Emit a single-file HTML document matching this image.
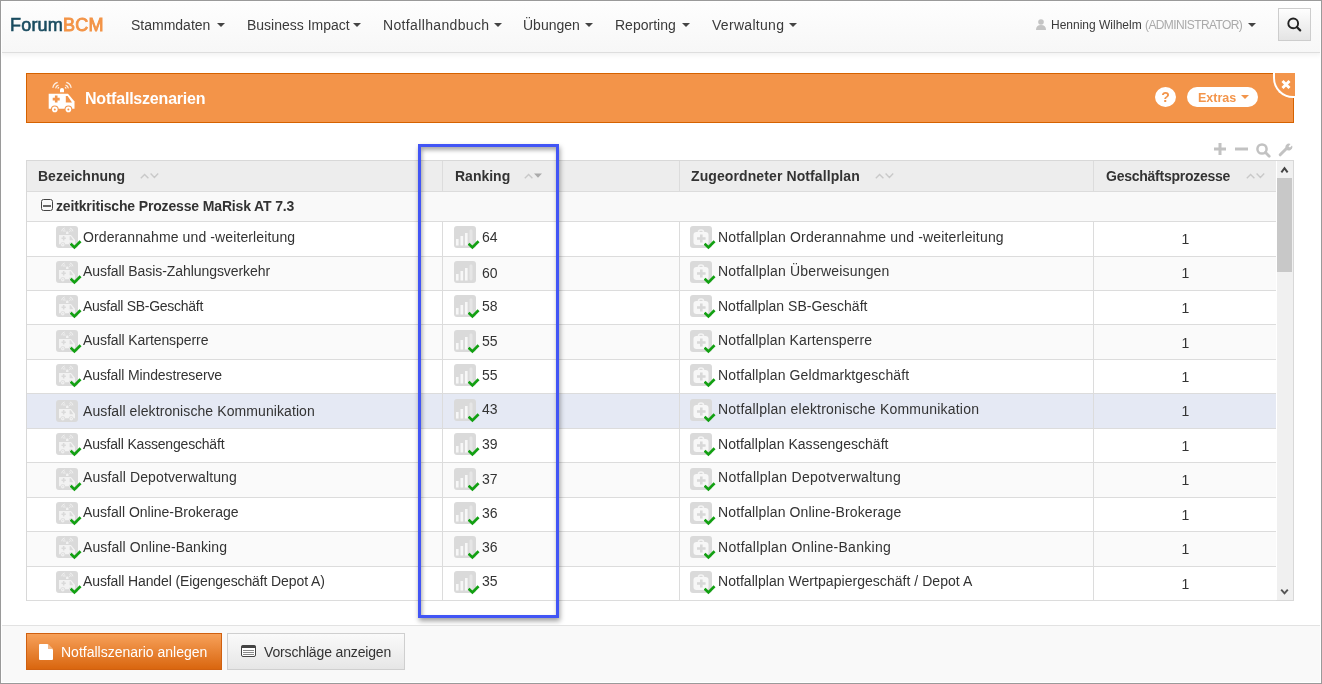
<!DOCTYPE html>
<html><head><meta charset="utf-8">
<style>
*{box-sizing:border-box;margin:0;padding:0}
html,body{width:1322px;height:684px;overflow:hidden;background:#fff}
body{position:relative;font-family:"Liberation Sans",sans-serif;color:#333;font-size:14px}
.a{position:absolute}
#frame{position:absolute;left:0;top:0;width:1322px;height:684px;border:1px solid #9a9a9a;box-shadow:inset 0 0 0 1px #fff;z-index:50;pointer-events:none}
#nav{position:absolute;left:1px;top:1px;width:1320px;height:52px;background:linear-gradient(#fefefe,#f7f7f7);border-bottom:1px solid #dedede;box-shadow:0 2px 5px rgba(0,0,0,0.06)}
.nv{position:absolute;top:17px;font-size:14px;color:#3a3a3a;line-height:16px;white-space:nowrap}
.caret{position:absolute;width:0;height:0;border-left:4px solid transparent;border-right:4px solid transparent;border-top:4px solid #444}
#logo{position:absolute;left:10px;top:15px;font-size:18px;font-weight:normal;line-height:20px;letter-spacing:0.2px;-webkit-text-stroke:0.6px currentColor;will-change:transform}
#panel{position:absolute;left:26px;top:73px;width:1268px;height:50px;background:#f39449;border:1px solid #d56200}
.tx{position:absolute;font-size:14px;line-height:20px;white-space:nowrap;color:#333}
.c4{left:1094px;width:183px;text-align:center}
.r{position:absolute;left:27px;width:1249px;background:#fff}
.r.alt{background:#fafafa}
.r.hov{background:#e5e9f4}
.hl{position:absolute;left:27px;width:1249px;height:1px;background:#dcdcdc}
.vl{position:absolute;width:1px;background:#dcdcdc}
.ib{position:absolute;width:22px;height:22px;background:#dadada;border-radius:3px}
.ib svg{position:absolute;left:0;top:0}
.ib svg.ck{left:14px;top:14px}
.th{position:absolute;top:167px;font-size:14px;font-weight:bold;line-height:18px;color:#333;white-space:nowrap}
.sa{position:absolute;top:172px}
.tx,.th,.nv,.a{will-change:transform}
</style></head><body>
<div id="frame"></div>
<div id="nav">
</div>
<div id="logo" style="color:#1a4c60">Forum<span style="color:#f39447;-webkit-text-stroke:0.9px #f39447">BCM</span></div>
<div class="nv" style="left:131px">Stammdaten</div><div class="caret" style="left:217px;top:23px;border-top-color:#444"></div>
<div class="nv" style="left:247px">Business Impact</div><div class="caret" style="left:353px;top:23px;border-top-color:#444"></div>
<div class="nv" style="left:383px;letter-spacing:0.35px">Notfallhandbuch</div><div class="caret" style="left:494px;top:23px;border-top-color:#444"></div>
<div class="nv" style="left:523px">Übungen</div><div class="caret" style="left:585px;top:23px;border-top-color:#444"></div>
<div class="nv" style="left:615px">Reporting</div><div class="caret" style="left:682px;top:23px;border-top-color:#444"></div>
<div class="nv" style="left:712px;letter-spacing:0.3px">Verwaltung</div><div class="caret" style="left:789px;top:23px;border-top-color:#444"></div>
<svg class="a" style="left:1036px;top:19px" width="10" height="11" viewBox="0 0 10 11"><circle cx="5" cy="3" r="2.8" fill="#c4c4c4"/><path d="M0 11 Q0 6 5 6 Q10 6 10 11Z" fill="#c4c4c4"/></svg>
<div class="nv" style="left:1051px;top:18px;font-size:12px;line-height:14px">Henning Wilhelm</div>
<div class="nv" style="left:1145px;top:18px;font-size:12px;line-height:14px;color:#aaa;letter-spacing:-0.6px">(ADMINISTRATOR)</div>
<div class="caret" style="left:1248px;top:23px;border-top-color:#444"></div>
<div class="a" style="left:1278px;top:8px;width:33px;height:33px;border:1px solid #cdcdcd;background:linear-gradient(#fefefe,#e4e4e4)"></div>
<svg class="a" style="left:1287px;top:17px" width="16" height="16" viewBox="0 0 16 16"><circle cx="6.2" cy="6.4" r="4.9" fill="none" stroke="#222" stroke-width="1.9"/><path d="M9.8 10 L13.2 13.4" stroke="#222" stroke-width="2.2" stroke-linecap="round"/></svg>

<div id="panel"></div>
<svg class="a" style="left:44px;top:78px" width="36" height="38" viewBox="0 0 36 38">
<path d="M4.7 15.8 L24 15.8 L30.5 23.5 L30.5 30.8 L4.7 30.8 Z" fill="#fff"/>
<path d="M21.8 18 L23.6 18 L28 24.4 L21.8 24.4 Z" fill="#f3954b"/>
<path d="M8.7 21.1 H15.7 M12.2 17.6 V24.6" stroke="#f3954b" stroke-width="2.6"/>
<circle cx="10.8" cy="31.4" r="3.9" fill="#f3954b"/><circle cx="10.8" cy="31.4" r="2.8" fill="#fff"/><circle cx="10.8" cy="31.4" r="1" fill="#f3954b"/>
<circle cx="24.4" cy="31.4" r="3.9" fill="#f3954b"/><circle cx="24.4" cy="31.4" r="2.8" fill="#fff"/><circle cx="24.4" cy="31.4" r="1" fill="#f3954b"/>
<path d="M16 14.2 V12 A2 2 0 0 1 20 12 V14.2 Z" fill="#fff"/>
<g fill="none" stroke="#fff" stroke-width="1.2" opacity="0.85">
<path d="M8.8 9.8 A6.8 6.8 0 0 1 13.7 4.4"/><path d="M11.6 10.3 A4 4 0 0 1 14.5 7.1"/><path d="M13.9 10.7 A1.6 1.6 0 0 1 15.1 9.4"/>
<path d="M27.2 9.8 A6.8 6.8 0 0 0 22.3 4.4"/><path d="M24.4 10.3 A4 4 0 0 0 21.5 7.1"/><path d="M22.1 10.7 A1.6 1.6 0 0 0 20.9 9.4"/>
</g></svg>
<div class="a" style="left:85px;top:90px;font-size:16px;letter-spacing:-0.2px;font-weight:bold;color:#fff;line-height:18px">Notfallszenarien</div>
<div class="a" style="left:1155px;top:87px;width:21px;height:20px;border-radius:50%;background:#fff;color:#f3954b;font-weight:bold;font-size:14px;line-height:20px;text-align:center">?</div>
<div class="a" style="left:1187px;top:87px;width:71px;height:20px;border-radius:10px;background:#fff"></div>
<div class="a" style="left:1198px;top:90px;font-size:12.5px;font-weight:bold;color:#f3954b;line-height:16px">Extras</div>
<div class="caret" style="left:1241px;top:95px;border-top-color:#f3954b"></div>
<div class="a" style="left:1273px;top:73px;width:22px;height:25px;background:#f3954b;border-left:2px solid #fff;border-bottom:2px solid #fff;border-bottom-left-radius:20px"></div>
<svg class="a" style="left:1281px;top:80px" width="10" height="9" viewBox="0 0 10 9"><path d="M1.5 1 L8.5 8 M8.5 1 L1.5 8" stroke="#fff" stroke-width="2.9"/></svg>

<!-- toolbar icons -->
<svg class="a" style="left:1214px;top:143px" width="12" height="12" viewBox="0 0 12 12"><path d="M0 6H12M6 0V12" stroke="#c2c2c2" stroke-width="3"/></svg>
<svg class="a" style="left:1235px;top:147px" width="13" height="4" viewBox="0 0 13 4"><path d="M0 2H13" stroke="#c2c2c2" stroke-width="3"/></svg>
<svg class="a" style="left:1256px;top:143px" width="15" height="15" viewBox="0 0 15 15"><circle cx="6" cy="6" r="4.6" fill="none" stroke="#c2c2c2" stroke-width="2.5"/><path d="M9.5 9.5 L13.2 13.2" stroke="#c2c2c2" stroke-width="2.8" stroke-linecap="round"/></svg>
<svg class="a" style="left:1278px;top:142px" width="15" height="15" viewBox="0 0 15 15"><path d="M2.2 12.8 L8.5 6.5" stroke="#c2c2c2" stroke-width="3" stroke-linecap="round"/><path d="M8 7 A3.5 3.5 0 0 1 12.5 2 L10.5 4.5 L12 5.5 L14 3.5 A3.5 3.5 0 0 1 8 7Z" fill="#c2c2c2"/></svg>

<!-- table -->
<div class="a" style="left:26px;top:160px;width:1268px;height:441px;border:1px solid #d8d8d8;background:#fff"></div>
<div class="a" style="left:27px;top:161px;width:1249px;height:30px;background:#ededed"></div>
<div class="hl" style="top:191px"></div>
<div class="a" style="left:27px;top:192px;width:1249px;height:29px;background:#f9f9f9"></div>
<div class="hl" style="top:221px"></div>
<div class="r" style="top:222px;height:34px"></div>
<div class="ib" style="left:56px;top:226px"><svg width="22" height="22" viewBox="0 0 22 22"><g transform="translate(0.09 -0.8) scale(0.62)"><path d="M4.7 15.8 L24 15.8 L30.5 23.5 L30.5 30.8 L4.7 30.8 Z" fill="#f2f2f2"/>
<path d="M21.8 18 L23.6 18 L28 24.4 L21.8 24.4 Z" fill="#dadada"/>
<path d="M8.7 21.1 H15.7 M12.2 17.6 V24.6" stroke="#dadada" stroke-width="2.6"/>
<circle cx="10.8" cy="31.4" r="3.9" fill="#dadada"/><circle cx="10.8" cy="31.4" r="2.8" fill="#f2f2f2"/><circle cx="10.8" cy="31.4" r="1" fill="#dadada"/>
<circle cx="24.4" cy="31.4" r="3.9" fill="#dadada"/><circle cx="24.4" cy="31.4" r="2.8" fill="#f2f2f2"/><circle cx="24.4" cy="31.4" r="1" fill="#dadada"/>
<path d="M16 14.2 V12 A2 2 0 0 1 20 12 V14.2 Z" fill="#f2f2f2"/>
<g fill="none" stroke="#f2f2f2" stroke-width="1.6" opacity="0.9">
<path d="M8.8 9.8 A6.8 6.8 0 0 1 13.7 4.4"/><path d="M11.6 10.3 A4 4 0 0 1 14.5 7.1"/><path d="M13.9 10.7 A1.6 1.6 0 0 1 15.1 9.4"/>
<path d="M27.2 9.8 A6.8 6.8 0 0 0 22.3 4.4"/><path d="M24.4 10.3 A4 4 0 0 0 21.5 7.1"/><path d="M22.1 10.7 A1.6 1.6 0 0 0 20.9 9.4"/>
</g></g></svg><svg class="ck" width="12" height="10" viewBox="0 0 12 10"><path d="M1.6 4.6 L4.4 7.4 L9.6 2.2" fill="none" stroke="#12a012" stroke-width="2.7" stroke-linecap="square"/></svg></div>
<div class="tx" style="left:83px;top:227px;letter-spacing:0.117px">Orderannahme und -weiterleitung</div>
<div class="ib" style="left:454px;top:226px"><svg width="22" height="22" viewBox="0 0 22 22"><g fill="#f7f7f7">
<rect x="2" y="13" width="2.6" height="6.5"/>
<rect x="6.5" y="10" width="2.6" height="9.5"/>
<rect x="11" y="7" width="2.6" height="12.5"/>
<rect x="15.5" y="3.5" width="3" height="16" rx="1.4" fill="#e6e6e6"/>
</g></svg><svg class="ck" width="12" height="10" viewBox="0 0 12 10"><path d="M1.6 4.6 L4.4 7.4 L9.6 2.2" fill="none" stroke="#12a012" stroke-width="2.7" stroke-linecap="square"/></svg></div>
<div class="tx" style="left:482px;top:227px">64</div>
<div class="ib" style="left:690px;top:226px"><svg width="22" height="22" viewBox="0 0 22 22">
<path d="M8.5 6 Q8.5 4 11 4 Q13.5 4 13.5 6" stroke="#f4f4f4" stroke-width="1.6" fill="none"/>
<rect x="3.5" y="6" width="15" height="13" rx="3" fill="#f7f7f7"/>
<path d="M7 12.5h8.6M11.3 8.4v8.2" stroke="#d8d8d8" stroke-width="2.6"/>
</svg><svg class="ck" width="12" height="10" viewBox="0 0 12 10"><path d="M1.6 4.6 L4.4 7.4 L9.6 2.2" fill="none" stroke="#12a012" stroke-width="2.7" stroke-linecap="square"/></svg></div>
<div class="tx" style="left:718px;top:227px;letter-spacing:0.167px">Notfallplan Orderannahme und -weiterleitung</div>
<div class="tx c4" style="top:229px">1</div>
<div class="hl" style="top:256px"></div>
<div class="r alt" style="top:257px;height:33px"></div>
<div class="ib" style="left:56px;top:261px"><svg width="22" height="22" viewBox="0 0 22 22"><g transform="translate(0.09 -0.8) scale(0.62)"><path d="M4.7 15.8 L24 15.8 L30.5 23.5 L30.5 30.8 L4.7 30.8 Z" fill="#f2f2f2"/>
<path d="M21.8 18 L23.6 18 L28 24.4 L21.8 24.4 Z" fill="#dadada"/>
<path d="M8.7 21.1 H15.7 M12.2 17.6 V24.6" stroke="#dadada" stroke-width="2.6"/>
<circle cx="10.8" cy="31.4" r="3.9" fill="#dadada"/><circle cx="10.8" cy="31.4" r="2.8" fill="#f2f2f2"/><circle cx="10.8" cy="31.4" r="1" fill="#dadada"/>
<circle cx="24.4" cy="31.4" r="3.9" fill="#dadada"/><circle cx="24.4" cy="31.4" r="2.8" fill="#f2f2f2"/><circle cx="24.4" cy="31.4" r="1" fill="#dadada"/>
<path d="M16 14.2 V12 A2 2 0 0 1 20 12 V14.2 Z" fill="#f2f2f2"/>
<g fill="none" stroke="#f2f2f2" stroke-width="1.6" opacity="0.9">
<path d="M8.8 9.8 A6.8 6.8 0 0 1 13.7 4.4"/><path d="M11.6 10.3 A4 4 0 0 1 14.5 7.1"/><path d="M13.9 10.7 A1.6 1.6 0 0 1 15.1 9.4"/>
<path d="M27.2 9.8 A6.8 6.8 0 0 0 22.3 4.4"/><path d="M24.4 10.3 A4 4 0 0 0 21.5 7.1"/><path d="M22.1 10.7 A1.6 1.6 0 0 0 20.9 9.4"/>
</g></g></svg><svg class="ck" width="12" height="10" viewBox="0 0 12 10"><path d="M1.6 4.6 L4.4 7.4 L9.6 2.2" fill="none" stroke="#12a012" stroke-width="2.7" stroke-linecap="square"/></svg></div>
<div class="tx" style="left:83px;top:261px;letter-spacing:-0.071px">Ausfall Basis-Zahlungsverkehr</div>
<div class="ib" style="left:454px;top:261px"><svg width="22" height="22" viewBox="0 0 22 22"><g fill="#f7f7f7">
<rect x="2" y="13" width="2.6" height="6.5"/>
<rect x="6.5" y="10" width="2.6" height="9.5"/>
<rect x="11" y="7" width="2.6" height="12.5"/>
<rect x="15.5" y="3.5" width="3" height="16" rx="1.4" fill="#e6e6e6"/>
</g></svg></div>
<div class="tx" style="left:482px;top:263px">60</div>
<div class="ib" style="left:690px;top:261px"><svg width="22" height="22" viewBox="0 0 22 22">
<path d="M8.5 6 Q8.5 4 11 4 Q13.5 4 13.5 6" stroke="#f4f4f4" stroke-width="1.6" fill="none"/>
<rect x="3.5" y="6" width="15" height="13" rx="3" fill="#f7f7f7"/>
<path d="M7 12.5h8.6M11.3 8.4v8.2" stroke="#d8d8d8" stroke-width="2.6"/>
</svg><svg class="ck" width="12" height="10" viewBox="0 0 12 10"><path d="M1.6 4.6 L4.4 7.4 L9.6 2.2" fill="none" stroke="#12a012" stroke-width="2.7" stroke-linecap="square"/></svg></div>
<div class="tx" style="left:718px;top:261px;letter-spacing:0.167px">Notfallplan Überweisungen</div>
<div class="tx c4" style="top:263px">1</div>
<div class="hl" style="top:290px"></div>
<div class="r" style="top:291px;height:33px"></div>
<div class="ib" style="left:56px;top:295px"><svg width="22" height="22" viewBox="0 0 22 22"><g transform="translate(0.09 -0.8) scale(0.62)"><path d="M4.7 15.8 L24 15.8 L30.5 23.5 L30.5 30.8 L4.7 30.8 Z" fill="#f2f2f2"/>
<path d="M21.8 18 L23.6 18 L28 24.4 L21.8 24.4 Z" fill="#dadada"/>
<path d="M8.7 21.1 H15.7 M12.2 17.6 V24.6" stroke="#dadada" stroke-width="2.6"/>
<circle cx="10.8" cy="31.4" r="3.9" fill="#dadada"/><circle cx="10.8" cy="31.4" r="2.8" fill="#f2f2f2"/><circle cx="10.8" cy="31.4" r="1" fill="#dadada"/>
<circle cx="24.4" cy="31.4" r="3.9" fill="#dadada"/><circle cx="24.4" cy="31.4" r="2.8" fill="#f2f2f2"/><circle cx="24.4" cy="31.4" r="1" fill="#dadada"/>
<path d="M16 14.2 V12 A2 2 0 0 1 20 12 V14.2 Z" fill="#f2f2f2"/>
<g fill="none" stroke="#f2f2f2" stroke-width="1.6" opacity="0.9">
<path d="M8.8 9.8 A6.8 6.8 0 0 1 13.7 4.4"/><path d="M11.6 10.3 A4 4 0 0 1 14.5 7.1"/><path d="M13.9 10.7 A1.6 1.6 0 0 1 15.1 9.4"/>
<path d="M27.2 9.8 A6.8 6.8 0 0 0 22.3 4.4"/><path d="M24.4 10.3 A4 4 0 0 0 21.5 7.1"/><path d="M22.1 10.7 A1.6 1.6 0 0 0 20.9 9.4"/>
</g></g></svg><svg class="ck" width="12" height="10" viewBox="0 0 12 10"><path d="M1.6 4.6 L4.4 7.4 L9.6 2.2" fill="none" stroke="#12a012" stroke-width="2.7" stroke-linecap="square"/></svg></div>
<div class="tx" style="left:83px;top:296px;letter-spacing:-0.278px">Ausfall SB-Geschäft</div>
<div class="ib" style="left:454px;top:295px"><svg width="22" height="22" viewBox="0 0 22 22"><g fill="#f7f7f7">
<rect x="2" y="13" width="2.6" height="6.5"/>
<rect x="6.5" y="10" width="2.6" height="9.5"/>
<rect x="11" y="7" width="2.6" height="12.5"/>
<rect x="15.5" y="3.5" width="3" height="16" rx="1.4" fill="#e6e6e6"/>
</g></svg><svg class="ck" width="12" height="10" viewBox="0 0 12 10"><path d="M1.6 4.6 L4.4 7.4 L9.6 2.2" fill="none" stroke="#12a012" stroke-width="2.7" stroke-linecap="square"/></svg></div>
<div class="tx" style="left:482px;top:296px">58</div>
<div class="ib" style="left:690px;top:295px"><svg width="22" height="22" viewBox="0 0 22 22">
<path d="M8.5 6 Q8.5 4 11 4 Q13.5 4 13.5 6" stroke="#f4f4f4" stroke-width="1.6" fill="none"/>
<rect x="3.5" y="6" width="15" height="13" rx="3" fill="#f7f7f7"/>
<path d="M7 12.5h8.6M11.3 8.4v8.2" stroke="#d8d8d8" stroke-width="2.6"/>
</svg><svg class="ck" width="12" height="10" viewBox="0 0 12 10"><path d="M1.6 4.6 L4.4 7.4 L9.6 2.2" fill="none" stroke="#12a012" stroke-width="2.7" stroke-linecap="square"/></svg></div>
<div class="tx" style="left:718px;top:296px;letter-spacing:0.000px">Notfallplan SB-Geschäft</div>
<div class="tx c4" style="top:298px">1</div>
<div class="hl" style="top:324px"></div>
<div class="r alt" style="top:325px;height:34px"></div>
<div class="ib" style="left:56px;top:330px"><svg width="22" height="22" viewBox="0 0 22 22"><g transform="translate(0.09 -0.8) scale(0.62)"><path d="M4.7 15.8 L24 15.8 L30.5 23.5 L30.5 30.8 L4.7 30.8 Z" fill="#f2f2f2"/>
<path d="M21.8 18 L23.6 18 L28 24.4 L21.8 24.4 Z" fill="#dadada"/>
<path d="M8.7 21.1 H15.7 M12.2 17.6 V24.6" stroke="#dadada" stroke-width="2.6"/>
<circle cx="10.8" cy="31.4" r="3.9" fill="#dadada"/><circle cx="10.8" cy="31.4" r="2.8" fill="#f2f2f2"/><circle cx="10.8" cy="31.4" r="1" fill="#dadada"/>
<circle cx="24.4" cy="31.4" r="3.9" fill="#dadada"/><circle cx="24.4" cy="31.4" r="2.8" fill="#f2f2f2"/><circle cx="24.4" cy="31.4" r="1" fill="#dadada"/>
<path d="M16 14.2 V12 A2 2 0 0 1 20 12 V14.2 Z" fill="#f2f2f2"/>
<g fill="none" stroke="#f2f2f2" stroke-width="1.6" opacity="0.9">
<path d="M8.8 9.8 A6.8 6.8 0 0 1 13.7 4.4"/><path d="M11.6 10.3 A4 4 0 0 1 14.5 7.1"/><path d="M13.9 10.7 A1.6 1.6 0 0 1 15.1 9.4"/>
<path d="M27.2 9.8 A6.8 6.8 0 0 0 22.3 4.4"/><path d="M24.4 10.3 A4 4 0 0 0 21.5 7.1"/><path d="M22.1 10.7 A1.6 1.6 0 0 0 20.9 9.4"/>
</g></g></svg><svg class="ck" width="12" height="10" viewBox="0 0 12 10"><path d="M1.6 4.6 L4.4 7.4 L9.6 2.2" fill="none" stroke="#12a012" stroke-width="2.7" stroke-linecap="square"/></svg></div>
<div class="tx" style="left:83px;top:330px;letter-spacing:-0.074px">Ausfall Kartensperre</div>
<div class="ib" style="left:454px;top:330px"><svg width="22" height="22" viewBox="0 0 22 22"><g fill="#f7f7f7">
<rect x="2" y="13" width="2.6" height="6.5"/>
<rect x="6.5" y="10" width="2.6" height="9.5"/>
<rect x="11" y="7" width="2.6" height="12.5"/>
<rect x="15.5" y="3.5" width="3" height="16" rx="1.4" fill="#e6e6e6"/>
</g></svg><svg class="ck" width="12" height="10" viewBox="0 0 12 10"><path d="M1.6 4.6 L4.4 7.4 L9.6 2.2" fill="none" stroke="#12a012" stroke-width="2.7" stroke-linecap="square"/></svg></div>
<div class="tx" style="left:482px;top:331px">55</div>
<div class="ib" style="left:690px;top:330px"><svg width="22" height="22" viewBox="0 0 22 22">
<path d="M8.5 6 Q8.5 4 11 4 Q13.5 4 13.5 6" stroke="#f4f4f4" stroke-width="1.6" fill="none"/>
<rect x="3.5" y="6" width="15" height="13" rx="3" fill="#f7f7f7"/>
<path d="M7 12.5h8.6M11.3 8.4v8.2" stroke="#d8d8d8" stroke-width="2.6"/>
</svg><svg class="ck" width="12" height="10" viewBox="0 0 12 10"><path d="M1.6 4.6 L4.4 7.4 L9.6 2.2" fill="none" stroke="#12a012" stroke-width="2.7" stroke-linecap="square"/></svg></div>
<div class="tx" style="left:718px;top:330px;letter-spacing:0.130px">Notfallplan Kartensperre</div>
<div class="tx c4" style="top:333px">1</div>
<div class="hl" style="top:359px"></div>
<div class="r" style="top:360px;height:33px"></div>
<div class="ib" style="left:56px;top:364px"><svg width="22" height="22" viewBox="0 0 22 22"><g transform="translate(0.09 -0.8) scale(0.62)"><path d="M4.7 15.8 L24 15.8 L30.5 23.5 L30.5 30.8 L4.7 30.8 Z" fill="#f2f2f2"/>
<path d="M21.8 18 L23.6 18 L28 24.4 L21.8 24.4 Z" fill="#dadada"/>
<path d="M8.7 21.1 H15.7 M12.2 17.6 V24.6" stroke="#dadada" stroke-width="2.6"/>
<circle cx="10.8" cy="31.4" r="3.9" fill="#dadada"/><circle cx="10.8" cy="31.4" r="2.8" fill="#f2f2f2"/><circle cx="10.8" cy="31.4" r="1" fill="#dadada"/>
<circle cx="24.4" cy="31.4" r="3.9" fill="#dadada"/><circle cx="24.4" cy="31.4" r="2.8" fill="#f2f2f2"/><circle cx="24.4" cy="31.4" r="1" fill="#dadada"/>
<path d="M16 14.2 V12 A2 2 0 0 1 20 12 V14.2 Z" fill="#f2f2f2"/>
<g fill="none" stroke="#f2f2f2" stroke-width="1.6" opacity="0.9">
<path d="M8.8 9.8 A6.8 6.8 0 0 1 13.7 4.4"/><path d="M11.6 10.3 A4 4 0 0 1 14.5 7.1"/><path d="M13.9 10.7 A1.6 1.6 0 0 1 15.1 9.4"/>
<path d="M27.2 9.8 A6.8 6.8 0 0 0 22.3 4.4"/><path d="M24.4 10.3 A4 4 0 0 0 21.5 7.1"/><path d="M22.1 10.7 A1.6 1.6 0 0 0 20.9 9.4"/>
</g></g></svg><svg class="ck" width="12" height="10" viewBox="0 0 12 10"><path d="M1.6 4.6 L4.4 7.4 L9.6 2.2" fill="none" stroke="#12a012" stroke-width="2.7" stroke-linecap="square"/></svg></div>
<div class="tx" style="left:83px;top:365px;letter-spacing:-0.119px">Ausfall Mindestreserve</div>
<div class="ib" style="left:454px;top:364px"><svg width="22" height="22" viewBox="0 0 22 22"><g fill="#f7f7f7">
<rect x="2" y="13" width="2.6" height="6.5"/>
<rect x="6.5" y="10" width="2.6" height="9.5"/>
<rect x="11" y="7" width="2.6" height="12.5"/>
<rect x="15.5" y="3.5" width="3" height="16" rx="1.4" fill="#e6e6e6"/>
</g></svg><svg class="ck" width="12" height="10" viewBox="0 0 12 10"><path d="M1.6 4.6 L4.4 7.4 L9.6 2.2" fill="none" stroke="#12a012" stroke-width="2.7" stroke-linecap="square"/></svg></div>
<div class="tx" style="left:482px;top:365px">55</div>
<div class="ib" style="left:690px;top:364px"><svg width="22" height="22" viewBox="0 0 22 22">
<path d="M8.5 6 Q8.5 4 11 4 Q13.5 4 13.5 6" stroke="#f4f4f4" stroke-width="1.6" fill="none"/>
<rect x="3.5" y="6" width="15" height="13" rx="3" fill="#f7f7f7"/>
<path d="M7 12.5h8.6M11.3 8.4v8.2" stroke="#d8d8d8" stroke-width="2.6"/>
</svg><svg class="ck" width="12" height="10" viewBox="0 0 12 10"><path d="M1.6 4.6 L4.4 7.4 L9.6 2.2" fill="none" stroke="#12a012" stroke-width="2.7" stroke-linecap="square"/></svg></div>
<div class="tx" style="left:718px;top:365px;letter-spacing:0.129px">Notfallplan Geldmarktgeschäft</div>
<div class="tx c4" style="top:367px">1</div>
<div class="hl" style="top:393px"></div>
<div class="r hov" style="top:394px;height:34px"></div>
<div class="ib" style="left:56px;top:400px"><svg width="22" height="22" viewBox="0 0 22 22"><g transform="translate(0.09 -0.8) scale(0.62)"><path d="M4.7 15.8 L24 15.8 L30.5 23.5 L30.5 30.8 L4.7 30.8 Z" fill="#f2f2f2"/>
<path d="M21.8 18 L23.6 18 L28 24.4 L21.8 24.4 Z" fill="#dadada"/>
<path d="M8.7 21.1 H15.7 M12.2 17.6 V24.6" stroke="#dadada" stroke-width="2.6"/>
<circle cx="10.8" cy="31.4" r="3.9" fill="#dadada"/><circle cx="10.8" cy="31.4" r="2.8" fill="#f2f2f2"/><circle cx="10.8" cy="31.4" r="1" fill="#dadada"/>
<circle cx="24.4" cy="31.4" r="3.9" fill="#dadada"/><circle cx="24.4" cy="31.4" r="2.8" fill="#f2f2f2"/><circle cx="24.4" cy="31.4" r="1" fill="#dadada"/>
<path d="M16 14.2 V12 A2 2 0 0 1 20 12 V14.2 Z" fill="#f2f2f2"/>
<g fill="none" stroke="#f2f2f2" stroke-width="1.6" opacity="0.9">
<path d="M8.8 9.8 A6.8 6.8 0 0 1 13.7 4.4"/><path d="M11.6 10.3 A4 4 0 0 1 14.5 7.1"/><path d="M13.9 10.7 A1.6 1.6 0 0 1 15.1 9.4"/>
<path d="M27.2 9.8 A6.8 6.8 0 0 0 22.3 4.4"/><path d="M24.4 10.3 A4 4 0 0 0 21.5 7.1"/><path d="M22.1 10.7 A1.6 1.6 0 0 0 20.9 9.4"/>
</g></g></svg></div>
<div class="tx" style="left:83px;top:401px;letter-spacing:0.088px">Ausfall elektronische Kommunikation</div>
<div class="ib" style="left:454px;top:399px"><svg width="22" height="22" viewBox="0 0 22 22"><g fill="#f7f7f7">
<rect x="2" y="13" width="2.6" height="6.5"/>
<rect x="6.5" y="10" width="2.6" height="9.5"/>
<rect x="11" y="7" width="2.6" height="12.5"/>
<rect x="15.5" y="3.5" width="3" height="16" rx="1.4" fill="#e6e6e6"/>
</g></svg><svg class="ck" width="12" height="10" viewBox="0 0 12 10"><path d="M1.6 4.6 L4.4 7.4 L9.6 2.2" fill="none" stroke="#12a012" stroke-width="2.7" stroke-linecap="square"/></svg></div>
<div class="tx" style="left:482px;top:399px">43</div>
<div class="ib" style="left:690px;top:399px"><svg width="22" height="22" viewBox="0 0 22 22">
<path d="M8.5 6 Q8.5 4 11 4 Q13.5 4 13.5 6" stroke="#f4f4f4" stroke-width="1.6" fill="none"/>
<rect x="3.5" y="6" width="15" height="13" rx="3" fill="#f7f7f7"/>
<path d="M7 12.5h8.6M11.3 8.4v8.2" stroke="#d8d8d8" stroke-width="2.6"/>
</svg><svg class="ck" width="12" height="10" viewBox="0 0 12 10"><path d="M1.6 4.6 L4.4 7.4 L9.6 2.2" fill="none" stroke="#12a012" stroke-width="2.7" stroke-linecap="square"/></svg></div>
<div class="tx" style="left:718px;top:399px;letter-spacing:0.211px">Notfallplan elektronische Kommunikation</div>
<div class="tx c4" style="top:401px">1</div>
<div class="hl" style="top:428px"></div>
<div class="r" style="top:429px;height:33px"></div>
<div class="ib" style="left:56px;top:433px"><svg width="22" height="22" viewBox="0 0 22 22"><g transform="translate(0.09 -0.8) scale(0.62)"><path d="M4.7 15.8 L24 15.8 L30.5 23.5 L30.5 30.8 L4.7 30.8 Z" fill="#f2f2f2"/>
<path d="M21.8 18 L23.6 18 L28 24.4 L21.8 24.4 Z" fill="#dadada"/>
<path d="M8.7 21.1 H15.7 M12.2 17.6 V24.6" stroke="#dadada" stroke-width="2.6"/>
<circle cx="10.8" cy="31.4" r="3.9" fill="#dadada"/><circle cx="10.8" cy="31.4" r="2.8" fill="#f2f2f2"/><circle cx="10.8" cy="31.4" r="1" fill="#dadada"/>
<circle cx="24.4" cy="31.4" r="3.9" fill="#dadada"/><circle cx="24.4" cy="31.4" r="2.8" fill="#f2f2f2"/><circle cx="24.4" cy="31.4" r="1" fill="#dadada"/>
<path d="M16 14.2 V12 A2 2 0 0 1 20 12 V14.2 Z" fill="#f2f2f2"/>
<g fill="none" stroke="#f2f2f2" stroke-width="1.6" opacity="0.9">
<path d="M8.8 9.8 A6.8 6.8 0 0 1 13.7 4.4"/><path d="M11.6 10.3 A4 4 0 0 1 14.5 7.1"/><path d="M13.9 10.7 A1.6 1.6 0 0 1 15.1 9.4"/>
<path d="M27.2 9.8 A6.8 6.8 0 0 0 22.3 4.4"/><path d="M24.4 10.3 A4 4 0 0 0 21.5 7.1"/><path d="M22.1 10.7 A1.6 1.6 0 0 0 20.9 9.4"/>
</g></g></svg><svg class="ck" width="12" height="10" viewBox="0 0 12 10"><path d="M1.6 4.6 L4.4 7.4 L9.6 2.2" fill="none" stroke="#12a012" stroke-width="2.7" stroke-linecap="square"/></svg></div>
<div class="tx" style="left:83px;top:434px;letter-spacing:-0.190px">Ausfall Kassengeschäft</div>
<div class="ib" style="left:454px;top:433px"><svg width="22" height="22" viewBox="0 0 22 22"><g fill="#f7f7f7">
<rect x="2" y="13" width="2.6" height="6.5"/>
<rect x="6.5" y="10" width="2.6" height="9.5"/>
<rect x="11" y="7" width="2.6" height="12.5"/>
<rect x="15.5" y="3.5" width="3" height="16" rx="1.4" fill="#e6e6e6"/>
</g></svg><svg class="ck" width="12" height="10" viewBox="0 0 12 10"><path d="M1.6 4.6 L4.4 7.4 L9.6 2.2" fill="none" stroke="#12a012" stroke-width="2.7" stroke-linecap="square"/></svg></div>
<div class="tx" style="left:482px;top:434px">39</div>
<div class="ib" style="left:690px;top:433px"><svg width="22" height="22" viewBox="0 0 22 22">
<path d="M8.5 6 Q8.5 4 11 4 Q13.5 4 13.5 6" stroke="#f4f4f4" stroke-width="1.6" fill="none"/>
<rect x="3.5" y="6" width="15" height="13" rx="3" fill="#f7f7f7"/>
<path d="M7 12.5h8.6M11.3 8.4v8.2" stroke="#d8d8d8" stroke-width="2.6"/>
</svg><svg class="ck" width="12" height="10" viewBox="0 0 12 10"><path d="M1.6 4.6 L4.4 7.4 L9.6 2.2" fill="none" stroke="#12a012" stroke-width="2.7" stroke-linecap="square"/></svg></div>
<div class="tx" style="left:718px;top:434px;letter-spacing:0.032px">Notfallplan Kassengeschäft</div>
<div class="tx c4" style="top:436px">1</div>
<div class="hl" style="top:462px"></div>
<div class="r alt" style="top:463px;height:34px"></div>
<div class="ib" style="left:56px;top:468px"><svg width="22" height="22" viewBox="0 0 22 22"><g transform="translate(0.09 -0.8) scale(0.62)"><path d="M4.7 15.8 L24 15.8 L30.5 23.5 L30.5 30.8 L4.7 30.8 Z" fill="#f2f2f2"/>
<path d="M21.8 18 L23.6 18 L28 24.4 L21.8 24.4 Z" fill="#dadada"/>
<path d="M8.7 21.1 H15.7 M12.2 17.6 V24.6" stroke="#dadada" stroke-width="2.6"/>
<circle cx="10.8" cy="31.4" r="3.9" fill="#dadada"/><circle cx="10.8" cy="31.4" r="2.8" fill="#f2f2f2"/><circle cx="10.8" cy="31.4" r="1" fill="#dadada"/>
<circle cx="24.4" cy="31.4" r="3.9" fill="#dadada"/><circle cx="24.4" cy="31.4" r="2.8" fill="#f2f2f2"/><circle cx="24.4" cy="31.4" r="1" fill="#dadada"/>
<path d="M16 14.2 V12 A2 2 0 0 1 20 12 V14.2 Z" fill="#f2f2f2"/>
<g fill="none" stroke="#f2f2f2" stroke-width="1.6" opacity="0.9">
<path d="M8.8 9.8 A6.8 6.8 0 0 1 13.7 4.4"/><path d="M11.6 10.3 A4 4 0 0 1 14.5 7.1"/><path d="M13.9 10.7 A1.6 1.6 0 0 1 15.1 9.4"/>
<path d="M27.2 9.8 A6.8 6.8 0 0 0 22.3 4.4"/><path d="M24.4 10.3 A4 4 0 0 0 21.5 7.1"/><path d="M22.1 10.7 A1.6 1.6 0 0 0 20.9 9.4"/>
</g></g></svg><svg class="ck" width="12" height="10" viewBox="0 0 12 10"><path d="M1.6 4.6 L4.4 7.4 L9.6 2.2" fill="none" stroke="#12a012" stroke-width="2.7" stroke-linecap="square"/></svg></div>
<div class="tx" style="left:83px;top:467px;letter-spacing:0.127px">Ausfall Depotverwaltung</div>
<div class="ib" style="left:454px;top:468px"><svg width="22" height="22" viewBox="0 0 22 22"><g fill="#f7f7f7">
<rect x="2" y="13" width="2.6" height="6.5"/>
<rect x="6.5" y="10" width="2.6" height="9.5"/>
<rect x="11" y="7" width="2.6" height="12.5"/>
<rect x="15.5" y="3.5" width="3" height="16" rx="1.4" fill="#e6e6e6"/>
</g></svg><svg class="ck" width="12" height="10" viewBox="0 0 12 10"><path d="M1.6 4.6 L4.4 7.4 L9.6 2.2" fill="none" stroke="#12a012" stroke-width="2.7" stroke-linecap="square"/></svg></div>
<div class="tx" style="left:482px;top:469px">37</div>
<div class="ib" style="left:690px;top:468px"><svg width="22" height="22" viewBox="0 0 22 22">
<path d="M8.5 6 Q8.5 4 11 4 Q13.5 4 13.5 6" stroke="#f4f4f4" stroke-width="1.6" fill="none"/>
<rect x="3.5" y="6" width="15" height="13" rx="3" fill="#f7f7f7"/>
<path d="M7 12.5h8.6M11.3 8.4v8.2" stroke="#d8d8d8" stroke-width="2.6"/>
</svg><svg class="ck" width="12" height="10" viewBox="0 0 12 10"><path d="M1.6 4.6 L4.4 7.4 L9.6 2.2" fill="none" stroke="#12a012" stroke-width="2.7" stroke-linecap="square"/></svg></div>
<div class="tx" style="left:718px;top:467px;letter-spacing:0.292px">Notfallplan Depotverwaltung</div>
<div class="tx c4" style="top:470px">1</div>
<div class="hl" style="top:497px"></div>
<div class="r" style="top:498px;height:33px"></div>
<div class="ib" style="left:56px;top:502px"><svg width="22" height="22" viewBox="0 0 22 22"><g transform="translate(0.09 -0.8) scale(0.62)"><path d="M4.7 15.8 L24 15.8 L30.5 23.5 L30.5 30.8 L4.7 30.8 Z" fill="#f2f2f2"/>
<path d="M21.8 18 L23.6 18 L28 24.4 L21.8 24.4 Z" fill="#dadada"/>
<path d="M8.7 21.1 H15.7 M12.2 17.6 V24.6" stroke="#dadada" stroke-width="2.6"/>
<circle cx="10.8" cy="31.4" r="3.9" fill="#dadada"/><circle cx="10.8" cy="31.4" r="2.8" fill="#f2f2f2"/><circle cx="10.8" cy="31.4" r="1" fill="#dadada"/>
<circle cx="24.4" cy="31.4" r="3.9" fill="#dadada"/><circle cx="24.4" cy="31.4" r="2.8" fill="#f2f2f2"/><circle cx="24.4" cy="31.4" r="1" fill="#dadada"/>
<path d="M16 14.2 V12 A2 2 0 0 1 20 12 V14.2 Z" fill="#f2f2f2"/>
<g fill="none" stroke="#f2f2f2" stroke-width="1.6" opacity="0.9">
<path d="M8.8 9.8 A6.8 6.8 0 0 1 13.7 4.4"/><path d="M11.6 10.3 A4 4 0 0 1 14.5 7.1"/><path d="M13.9 10.7 A1.6 1.6 0 0 1 15.1 9.4"/>
<path d="M27.2 9.8 A6.8 6.8 0 0 0 22.3 4.4"/><path d="M24.4 10.3 A4 4 0 0 0 21.5 7.1"/><path d="M22.1 10.7 A1.6 1.6 0 0 0 20.9 9.4"/>
</g></g></svg><svg class="ck" width="12" height="10" viewBox="0 0 12 10"><path d="M1.6 4.6 L4.4 7.4 L9.6 2.2" fill="none" stroke="#12a012" stroke-width="2.7" stroke-linecap="square"/></svg></div>
<div class="tx" style="left:83px;top:502px;letter-spacing:-0.004px">Ausfall Online-Brokerage</div>
<div class="ib" style="left:454px;top:502px"><svg width="22" height="22" viewBox="0 0 22 22"><g fill="#f7f7f7">
<rect x="2" y="13" width="2.6" height="6.5"/>
<rect x="6.5" y="10" width="2.6" height="9.5"/>
<rect x="11" y="7" width="2.6" height="12.5"/>
<rect x="15.5" y="3.5" width="3" height="16" rx="1.4" fill="#e6e6e6"/>
</g></svg><svg class="ck" width="12" height="10" viewBox="0 0 12 10"><path d="M1.6 4.6 L4.4 7.4 L9.6 2.2" fill="none" stroke="#12a012" stroke-width="2.7" stroke-linecap="square"/></svg></div>
<div class="tx" style="left:482px;top:503px">36</div>
<div class="ib" style="left:690px;top:502px"><svg width="22" height="22" viewBox="0 0 22 22">
<path d="M8.5 6 Q8.5 4 11 4 Q13.5 4 13.5 6" stroke="#f4f4f4" stroke-width="1.6" fill="none"/>
<rect x="3.5" y="6" width="15" height="13" rx="3" fill="#f7f7f7"/>
<path d="M7 12.5h8.6M11.3 8.4v8.2" stroke="#d8d8d8" stroke-width="2.6"/>
</svg><svg class="ck" width="12" height="10" viewBox="0 0 12 10"><path d="M1.6 4.6 L4.4 7.4 L9.6 2.2" fill="none" stroke="#12a012" stroke-width="2.7" stroke-linecap="square"/></svg></div>
<div class="tx" style="left:718px;top:502px;letter-spacing:0.126px">Notfallplan Online-Brokerage</div>
<div class="tx c4" style="top:505px">1</div>
<div class="hl" style="top:531px"></div>
<div class="r alt" style="top:532px;height:34px"></div>
<div class="ib" style="left:56px;top:536px"><svg width="22" height="22" viewBox="0 0 22 22"><g transform="translate(0.09 -0.8) scale(0.62)"><path d="M4.7 15.8 L24 15.8 L30.5 23.5 L30.5 30.8 L4.7 30.8 Z" fill="#f2f2f2"/>
<path d="M21.8 18 L23.6 18 L28 24.4 L21.8 24.4 Z" fill="#dadada"/>
<path d="M8.7 21.1 H15.7 M12.2 17.6 V24.6" stroke="#dadada" stroke-width="2.6"/>
<circle cx="10.8" cy="31.4" r="3.9" fill="#dadada"/><circle cx="10.8" cy="31.4" r="2.8" fill="#f2f2f2"/><circle cx="10.8" cy="31.4" r="1" fill="#dadada"/>
<circle cx="24.4" cy="31.4" r="3.9" fill="#dadada"/><circle cx="24.4" cy="31.4" r="2.8" fill="#f2f2f2"/><circle cx="24.4" cy="31.4" r="1" fill="#dadada"/>
<path d="M16 14.2 V12 A2 2 0 0 1 20 12 V14.2 Z" fill="#f2f2f2"/>
<g fill="none" stroke="#f2f2f2" stroke-width="1.6" opacity="0.9">
<path d="M8.8 9.8 A6.8 6.8 0 0 1 13.7 4.4"/><path d="M11.6 10.3 A4 4 0 0 1 14.5 7.1"/><path d="M13.9 10.7 A1.6 1.6 0 0 1 15.1 9.4"/>
<path d="M27.2 9.8 A6.8 6.8 0 0 0 22.3 4.4"/><path d="M24.4 10.3 A4 4 0 0 0 21.5 7.1"/><path d="M22.1 10.7 A1.6 1.6 0 0 0 20.9 9.4"/>
</g></g></svg><svg class="ck" width="12" height="10" viewBox="0 0 12 10"><path d="M1.6 4.6 L4.4 7.4 L9.6 2.2" fill="none" stroke="#12a012" stroke-width="2.7" stroke-linecap="square"/></svg></div>
<div class="tx" style="left:83px;top:537px;letter-spacing:0.110px">Ausfall Online-Banking</div>
<div class="ib" style="left:454px;top:536px"><svg width="22" height="22" viewBox="0 0 22 22"><g fill="#f7f7f7">
<rect x="2" y="13" width="2.6" height="6.5"/>
<rect x="6.5" y="10" width="2.6" height="9.5"/>
<rect x="11" y="7" width="2.6" height="12.5"/>
<rect x="15.5" y="3.5" width="3" height="16" rx="1.4" fill="#e6e6e6"/>
</g></svg><svg class="ck" width="12" height="10" viewBox="0 0 12 10"><path d="M1.6 4.6 L4.4 7.4 L9.6 2.2" fill="none" stroke="#12a012" stroke-width="2.7" stroke-linecap="square"/></svg></div>
<div class="tx" style="left:482px;top:537px">36</div>
<div class="ib" style="left:690px;top:536px"><svg width="22" height="22" viewBox="0 0 22 22">
<path d="M8.5 6 Q8.5 4 11 4 Q13.5 4 13.5 6" stroke="#f4f4f4" stroke-width="1.6" fill="none"/>
<rect x="3.5" y="6" width="15" height="13" rx="3" fill="#f7f7f7"/>
<path d="M7 12.5h8.6M11.3 8.4v8.2" stroke="#d8d8d8" stroke-width="2.6"/>
</svg><svg class="ck" width="12" height="10" viewBox="0 0 12 10"><path d="M1.6 4.6 L4.4 7.4 L9.6 2.2" fill="none" stroke="#12a012" stroke-width="2.7" stroke-linecap="square"/></svg></div>
<div class="tx" style="left:718px;top:537px;letter-spacing:0.280px">Notfallplan Online-Banking</div>
<div class="tx c4" style="top:539px">1</div>
<div class="hl" style="top:566px"></div>
<div class="r" style="top:567px;height:33px"></div>
<div class="ib" style="left:56px;top:571px"><svg width="22" height="22" viewBox="0 0 22 22"><g transform="translate(0.09 -0.8) scale(0.62)"><path d="M4.7 15.8 L24 15.8 L30.5 23.5 L30.5 30.8 L4.7 30.8 Z" fill="#f2f2f2"/>
<path d="M21.8 18 L23.6 18 L28 24.4 L21.8 24.4 Z" fill="#dadada"/>
<path d="M8.7 21.1 H15.7 M12.2 17.6 V24.6" stroke="#dadada" stroke-width="2.6"/>
<circle cx="10.8" cy="31.4" r="3.9" fill="#dadada"/><circle cx="10.8" cy="31.4" r="2.8" fill="#f2f2f2"/><circle cx="10.8" cy="31.4" r="1" fill="#dadada"/>
<circle cx="24.4" cy="31.4" r="3.9" fill="#dadada"/><circle cx="24.4" cy="31.4" r="2.8" fill="#f2f2f2"/><circle cx="24.4" cy="31.4" r="1" fill="#dadada"/>
<path d="M16 14.2 V12 A2 2 0 0 1 20 12 V14.2 Z" fill="#f2f2f2"/>
<g fill="none" stroke="#f2f2f2" stroke-width="1.6" opacity="0.9">
<path d="M8.8 9.8 A6.8 6.8 0 0 1 13.7 4.4"/><path d="M11.6 10.3 A4 4 0 0 1 14.5 7.1"/><path d="M13.9 10.7 A1.6 1.6 0 0 1 15.1 9.4"/>
<path d="M27.2 9.8 A6.8 6.8 0 0 0 22.3 4.4"/><path d="M24.4 10.3 A4 4 0 0 0 21.5 7.1"/><path d="M22.1 10.7 A1.6 1.6 0 0 0 20.9 9.4"/>
</g></g></svg><svg class="ck" width="12" height="10" viewBox="0 0 12 10"><path d="M1.6 4.6 L4.4 7.4 L9.6 2.2" fill="none" stroke="#12a012" stroke-width="2.7" stroke-linecap="square"/></svg></div>
<div class="tx" style="left:83px;top:571px;letter-spacing:-0.111px">Ausfall Handel (Eigengeschäft Depot A)</div>
<div class="ib" style="left:454px;top:571px"><svg width="22" height="22" viewBox="0 0 22 22"><g fill="#f7f7f7">
<rect x="2" y="13" width="2.6" height="6.5"/>
<rect x="6.5" y="10" width="2.6" height="9.5"/>
<rect x="11" y="7" width="2.6" height="12.5"/>
<rect x="15.5" y="3.5" width="3" height="16" rx="1.4" fill="#e6e6e6"/>
</g></svg><svg class="ck" width="12" height="10" viewBox="0 0 12 10"><path d="M1.6 4.6 L4.4 7.4 L9.6 2.2" fill="none" stroke="#12a012" stroke-width="2.7" stroke-linecap="square"/></svg></div>
<div class="tx" style="left:482px;top:571px">35</div>
<div class="ib" style="left:690px;top:571px"><svg width="22" height="22" viewBox="0 0 22 22">
<path d="M8.5 6 Q8.5 4 11 4 Q13.5 4 13.5 6" stroke="#f4f4f4" stroke-width="1.6" fill="none"/>
<rect x="3.5" y="6" width="15" height="13" rx="3" fill="#f7f7f7"/>
<path d="M7 12.5h8.6M11.3 8.4v8.2" stroke="#d8d8d8" stroke-width="2.6"/>
</svg><svg class="ck" width="12" height="10" viewBox="0 0 12 10"><path d="M1.6 4.6 L4.4 7.4 L9.6 2.2" fill="none" stroke="#12a012" stroke-width="2.7" stroke-linecap="square"/></svg></div>
<div class="tx" style="left:718px;top:571px;letter-spacing:0.041px">Notfallplan Wertpapiergeschäft / Depot A</div>
<div class="tx c4" style="top:574px">1</div>
<div class="hl" style="top:600px"></div>

<div class="vl" style="left:442px;top:161px;height:30px"></div>
<div class="vl" style="left:679px;top:161px;height:30px"></div>
<div class="vl" style="left:1093px;top:161px;height:30px"></div>
<div class="vl" style="left:442px;top:222px;height:378px"></div>
<div class="vl" style="left:679px;top:222px;height:378px"></div>
<div class="vl" style="left:1093px;top:222px;height:378px"></div>

<div class="th" style="left:38px">Bezeichnung</div>
<div class="th" style="left:455px">Ranking</div>
<div class="th" style="left:691px;letter-spacing:0.1px">Zugeordneter Notfallplan</div>
<div class="th" style="left:1106px;letter-spacing:-0.25px">Geschäftsprozesse</div>
<svg class="sa" style="left:140px" width="19" height="7" viewBox="0 0 19 7"><path d="M0.8 6.2 L4.6 2.4 L8.4 6.2 M10.6 1.6 L14.4 5.4 L18.2 1.6" stroke="#c9c9c9" stroke-width="1.4" fill="none"/></svg>
<svg class="sa" style="left:524px" width="19" height="7" viewBox="0 0 19 7"><path d="M0.8 6.2 L4.6 2.4 L8.4 6.2" stroke="#c9c9c9" stroke-width="1.4" fill="none"/><path d="M10 1.5 H18 L14 5.8Z" fill="#aaa"/></svg>
<svg class="sa" style="left:875px" width="19" height="7" viewBox="0 0 19 7"><path d="M0.8 6.2 L4.6 2.4 L8.4 6.2 M10.6 1.6 L14.4 5.4 L18.2 1.6" stroke="#c9c9c9" stroke-width="1.4" fill="none"/></svg>
<svg class="sa" style="left:1246px" width="19" height="7" viewBox="0 0 19 7"><path d="M0.8 6.2 L4.6 2.4 L8.4 6.2 M10.6 1.6 L14.4 5.4 L18.2 1.6" stroke="#c9c9c9" stroke-width="1.4" fill="none"/></svg>

<div class="a" style="left:41px;top:199px;width:12px;height:12px;border:1.3px solid #444;border-radius:2.5px"></div>
<div class="a" style="left:43px;top:204.5px;width:7.5px;height:1.6px;background:#666"></div>
<div class="tx" style="left:56px;top:196px;font-weight:bold;letter-spacing:-0.15px">zeitkritische Prozesse MaRisk AT 7.3</div>

<!-- scrollbar -->
<div class="a" style="left:1277px;top:161px;width:16px;height:439px;background:#f0f0f0"></div>
<div class="a" style="left:1277px;top:178px;width:15px;height:94px;background:#c8c8c8"></div>
<svg class="a" style="left:1280px;top:166px" width="9" height="8" viewBox="0 0 9 8"><path d="M1.4 6.4 L4.5 2.2 L7.6 6.4" stroke="#444" stroke-width="2" fill="none"/></svg>
<svg class="a" style="left:1280px;top:588px" width="9" height="8" viewBox="0 0 9 8"><path d="M1.2 1.6 L4.5 5.4 L7.8 1.6" stroke="#555" stroke-width="1.9" fill="none"/></svg>

<!-- blue highlight -->
<div class="a" style="left:418px;top:144px;width:141px;height:474px;border:3px solid #4255f5;box-shadow:1px 3px 5px rgba(0,0,0,0.38), inset 1px 3px 4px rgba(0,0,0,0.35)"></div>

<!-- footer -->
<div class="a" style="left:1px;top:625px;width:1320px;height:58px;background:#f9f9f9;border-top:1px solid #e2e2e2"></div>
<div class="a" style="left:26px;top:633px;width:196px;height:37px;background:linear-gradient(#f7a15a,#d9660f);border:1px solid #d06010"></div>
<svg class="a" style="left:39px;top:644px" width="14" height="16" viewBox="0 0 14 16"><path d="M0 1 Q0 0 1 0 H8.5 L14 5.5 V15 Q14 16 13 16 H1 Q0 16 0 15Z" fill="#fff"/><path d="M9 0 V5 H14" fill="#f3b98a"/></svg>
<div class="a" style="left:61px;top:643px;font-size:14px;color:#fff;line-height:18px">Notfallszenario anlegen</div>
<div class="a" style="left:227px;top:633px;width:178px;height:37px;background:linear-gradient(#fafafa,#e6e6e6);border:1px solid #cfcfcf"></div>
<svg class="a" style="left:241px;top:645px" width="15" height="12" viewBox="0 0 15 12"><rect x="0.5" y="0.5" width="14" height="11" rx="1.5" fill="#fff" stroke="#444"/><rect x="0.5" y="0.5" width="14" height="2.5" fill="#444"/><path d="M2 5.5H13M2 7.5H13M2 9.5H13" stroke="#888" stroke-width="1"/></svg>
<div class="a" style="left:264px;top:643px;font-size:14px;color:#333;line-height:18px;letter-spacing:-0.15px">Vorschläge anzeigen</div>
</body></html>
